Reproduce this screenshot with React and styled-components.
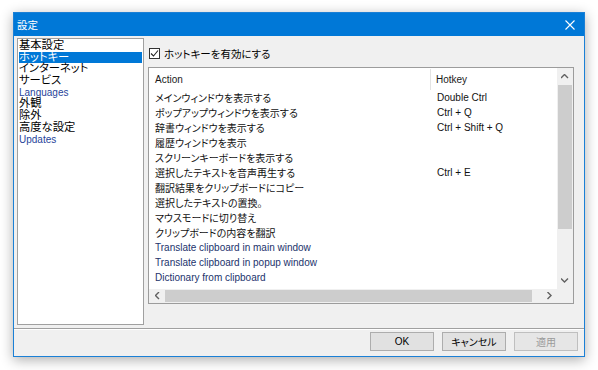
import React from 'react'
import styled, { createGlobalStyle } from 'styled-components'

const GlobalStyle = createGlobalStyle`
    html, body {
        margin: 0;
        background: #ffffff;
    }
    body {
        font-family: "Liberation Sans", "Noto Sans CJK JP", sans-serif;
        font-feature-settings: "palt";
    }
`;

const Page = styled.div`
    padding: 12px 0 0 13px;
    width: 598px;
    height: 370px;
    box-sizing: border-box;
`;

const Window = styled.div`
    width: 572px;
    height: 345px;
    box-sizing: border-box;
    border: 1px solid #1b80d6;
    background: #f0f0f0;
    box-shadow: 0 3px 12px rgba(0, 0, 0, 0.32);
    display: flex;
    flex-direction: column;
`;

const TitleBar = styled.div`
    height: 23px;
    flex: none;
    background: #0078d7;
    color: #ffffff;
    display: flex;
    align-items: center;
    justify-content: space-between;
    padding: 0 9px 0 3px;
    font-size: 10.5px;
`;

const Body = styled.div`
    height: 292px;
    flex: none;
    display: flex;
    gap: 4px;
    padding: 2px 10px 0 3px;
    box-sizing: border-box;
`;

const Sidebar = styled.ul`
    list-style: none;
    margin: 0;
    padding: 1px;
    width: 127px;
    height: 287px;
    box-sizing: border-box;
    border: 1px solid #a0a0a0;
    background: #ffffff;
    font-size: 11px;
`;

const SideItem = styled.li`
    height: 11.7px;
    line-height: 11.7px;
    white-space: nowrap;
    background: ${p => p.$active ? '#0078d7' : 'transparent'};
    color: ${p => p.$active ? '#ffffff' : p.$en ? '#26449a' : '#000000'};
    font-size: ${p => p.$en ? '10px' : '11.3px'};
`;

const Panel = styled.div`
    flex: 1;
    display: flex;
    flex-direction: column;
    padding-top: 10px;
`;

const CheckRow = styled.label`
    display: flex;
    align-items: center;
    gap: 4px;
    height: 11px;
    margin: 0 0 8px 1px;
    font-size: 10.5px;
    color: #000;
`;

const CheckBox = styled.span`
    width: 11px;
    height: 11px;
    box-sizing: border-box;
    border: 1px solid #333;
    background: #fff;
    display: flex;
    align-items: center;
    justify-content: center;
`;

const TableBox = styled.div`
    width: 426px;
    height: 237px;
    box-sizing: border-box;
    border: 1px solid #9c9c9c;
    background: #ffffff;
    display: grid;
    grid-template-columns: 1fr 16px;
    grid-template-rows: 1fr 14px;
`;

const Table = styled.div`
    overflow: hidden;
    display: grid;
    grid-template-columns: 282px 1fr;
    grid-template-rows: 22px;
    grid-auto-rows: 15px;
    font-size: 10px;
`;

const HeadCell = styled.div`
    display: flex;
    align-items: center;
    padding-left: ${p => p.$first ? '6px' : '5px'};
    border-right: ${p => p.$first ? '1px solid #e3e3e3' : 'none'};
    margin: 1px 0 0;
    color: #1a1a1a;
`;

const Cell = styled.div`
    display: flex;
    align-items: center;
    white-space: nowrap;
    padding-left: 6px;
    color: ${p => p.$en ? '#22336c' : '#111111'};
`;

const VScroll = styled.div`
    background: #f0f0f0;
    display: flex;
    flex-direction: column;
`;

const HScroll = styled.div`
    background: #f0f0f0;
    display: flex;
`;

const Corner = styled.div`
    background: #f0f0f0;
`;

const Arrow = styled.div`
    flex: none;
    width: ${p => p.$h ? '16px' : 'auto'};
    height: ${p => p.$h ? 'auto' : '17px'};
    display: flex;
    align-items: center;
    justify-content: center;
`;

const Thumb = styled.div`
    flex: none;
    background: #cdcdcd;
    ${p => p.$h
        ? `width: ${p.$size}px; margin: 1px 0;`
        : `height: ${p.$size}px; margin: 0 1px;`}
`;

const Track = styled.div`
    flex: 1;
`;

const Footer = styled.div`
    flex: 1;
    border-top: 1px solid #a0a0a0;
    box-shadow: inset 0 1px 0 #ffffff;
    display: flex;
    justify-content: flex-end;
    align-items: flex-start;
    gap: 8px;
    padding: 3px 6px 0 0;
`;

const Button = styled.button`
    width: 64px;
    height: 19px;
    box-sizing: border-box;
    border: 1px solid ${p => p.disabled ? '#bfbfbf' : '#adadad'};
    background: ${p => p.disabled ? '#e6e6e6' : '#e1e1e1'};
    color: ${p => p.disabled ? '#9a9a9a' : '#000'};
    font-family: "Liberation Sans", "Noto Sans CJK JP", sans-serif;
    font-feature-settings: "palt";
    font-size: 10px;
    padding: 0;
`;

const Chevron = ({ dir }) => {
    const pts = {
        up: '0,4 3.5,0.5 7,4',
        down: '0,0.5 3.5,4 7,0.5',
        left: '4,0 0.5,3.5 4,7',
        right: '0.5,0 4,3.5 0.5,7',
    }[dir];
    const horiz = dir === 'left' || dir === 'right';
    return (
        <svg width={horiz ? 5 : 8} height={horiz ? 8 : 5} viewBox={horiz ? '0 0 5 8' : '0 0 8 5'}>
            <polyline points={pts} fill="none" stroke="#606060" strokeWidth="1.4" />
        </svg>
    );
};

const sideItems = [
    { label: '基本設定' },
    { label: 'ホットキー', active: true },
    { label: 'インターネット' },
    { label: 'サービス' },
    { label: 'Languages', en: true },
    { label: '外観' },
    { label: '除外' },
    { label: '高度な設定' },
    { label: 'Updates', en: true },
];

const rows = [
    ['メインウィンドウを表示する', 'Double Ctrl'],
    ['ポップアップウィンドウを表示する', 'Ctrl + Q'],
    ['辞書ウィンドウを表示する', 'Ctrl + Shift + Q'],
    ['履歴ウィンドウを表示', ''],
    ['スクリーンキーボードを表示する', ''],
    ['選択したテキストを音声再生する', 'Ctrl + E'],
    ['翻訳結果をクリップボードにコピー', ''],
    ['選択したテキストの置換。', ''],
    ['マウスモードに切り替え', ''],
    ['クリップボードの内容を翻訳', ''],
    ['Translate clipboard in main window', '', true],
    ['Translate clipboard in popup window', '', true],
    ['Dictionary from clipboard', '', true],
];

export default function App() {
    return (
        <Page>
            <GlobalStyle />
            <Window>
                <TitleBar>
                    <span>設定</span>
                    <svg width="10" height="10" viewBox="0 0 10 10">
                        <path d="M0.5 0.5 L9.5 9.5 M9.5 0.5 L0.5 9.5" stroke="#fff" strokeWidth="1.1" />
                    </svg>
                </TitleBar>
                <Body>
                    <Sidebar>
                        {sideItems.map(it => (
                            <SideItem key={it.label} $active={it.active} $en={it.en}>{it.label}</SideItem>
                        ))}
                    </Sidebar>
                    <Panel>
                        <CheckRow>
                            <CheckBox>
                                <svg width="9" height="9" viewBox="0 0 9 9">
                                    <polyline points="1,4.5 3.5,7 8,1.5" fill="none" stroke="#222" strokeWidth="1.1" />
                                </svg>
                            </CheckBox>
                            ホットキーを有効にする
                        </CheckRow>
                        <TableBox>
                            <Table>
                                <HeadCell $first>Action</HeadCell>
                                <HeadCell>Hotkey</HeadCell>
                                {rows.map(([action, key, en]) => (
                                    <React.Fragment key={action}>
                                        <Cell $first $en={en}>{action}</Cell>
                                        <Cell>{key}</Cell>
                                    </React.Fragment>
                                ))}
                            </Table>
                            <VScroll>
                                <Arrow><Chevron dir="up" /></Arrow>
                                <Thumb $size={144} />
                                <Track />
                                <Arrow><Chevron dir="down" /></Arrow>
                            </VScroll>
                            <HScroll>
                                <Arrow $h><Chevron dir="left" /></Arrow>
                                <Thumb $h $size={367} />
                                <Track />
                                <Arrow $h><Chevron dir="right" /></Arrow>
                            </HScroll>
                            <Corner />
                        </TableBox>
                    </Panel>
                </Body>
                <Footer>
                    <Button>OK</Button>
                    <Button>キャンセル</Button>
                    <Button disabled>適用</Button>
                </Footer>
            </Window>
        </Page>
    );
}
